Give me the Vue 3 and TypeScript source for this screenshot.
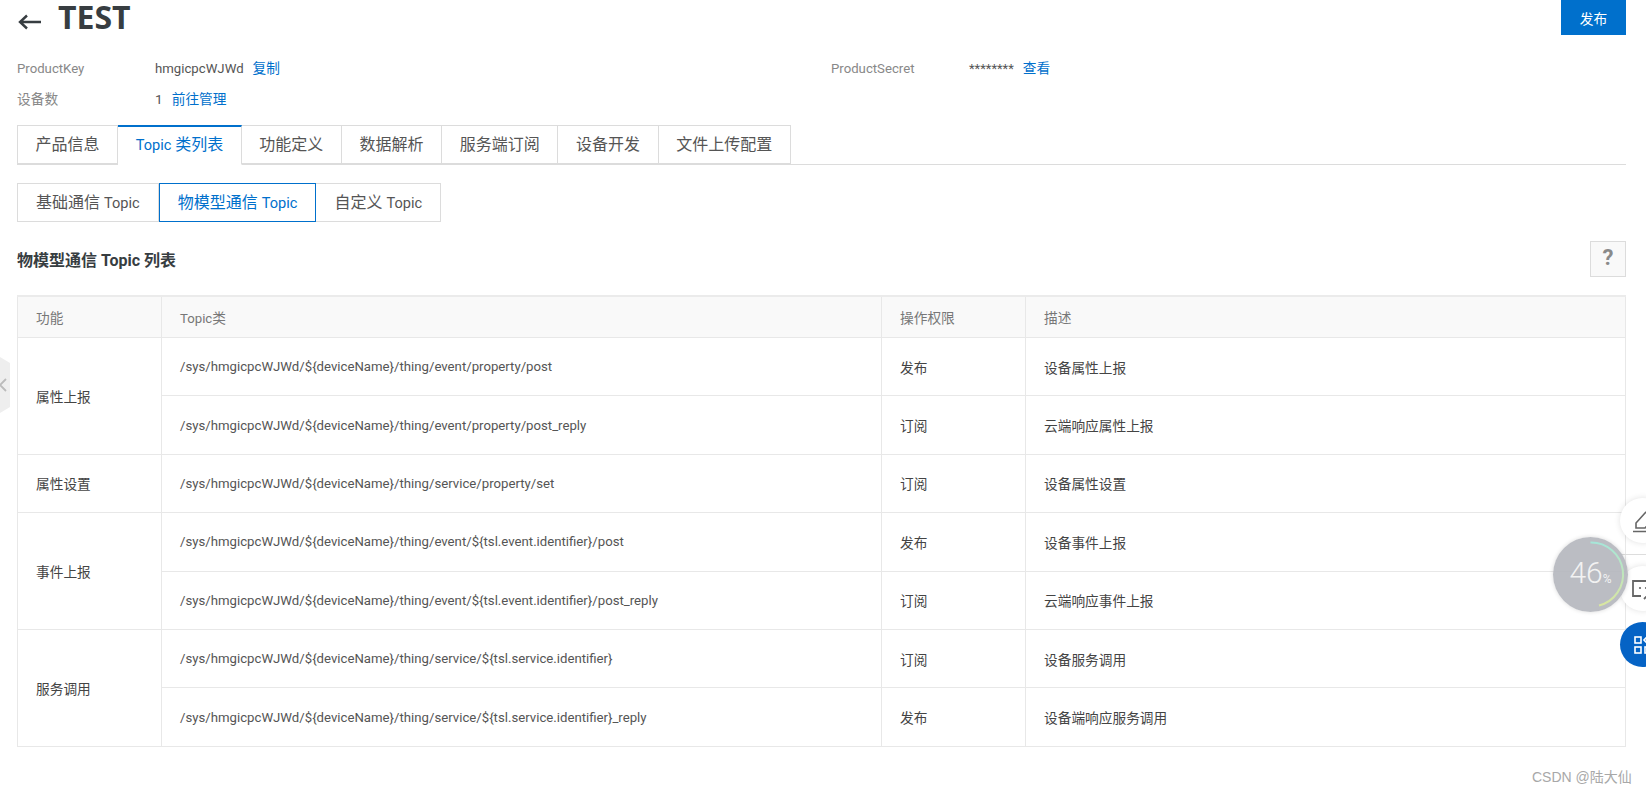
<script setup lang="ts">
interface Row { group?: string; span?: number; topic: string; perm: string; desc: string }
const base = '/sys/hmgicpcWJWd/${deviceName}/thing/'
const rows: Row[] = [
  { group: '属性上报', span: 2, topic: base + 'event/property/post', perm: '发布', desc: '设备属性上报' },
  { topic: base + 'event/property/post_reply', perm: '订阅', desc: '云端响应属性上报' },
  { group: '属性设置', span: 1, topic: base + 'service/property/set', perm: '订阅', desc: '设备属性设置' },
  { group: '事件上报', span: 2, topic: base + 'event/${tsl.event.identifier}/post', perm: '发布', desc: '设备事件上报' },
  { topic: base + 'event/${tsl.event.identifier}/post_reply', perm: '订阅', desc: '云端响应事件上报' },
  { group: '服务调用', span: 2, topic: base + 'service/${tsl.service.identifier}', perm: '订阅', desc: '设备服务调用' },
  { topic: base + 'service/${tsl.service.identifier}_reply', perm: '发布', desc: '设备端响应服务调用' }
]
const tabs = [
  { a: '产品信息', b: '', c: '' },
  { a: '', b: 'Topic ', c: '类列表' },
  { a: '功能定义', b: '', c: '' },
  { a: '数据解析', b: '', c: '' },
  { a: '服务端订阅', b: '', c: '' },
  { a: '设备开发', b: '', c: '' },
  { a: '文件上传配置', b: '', c: '' }
]
const subs = ['基础通信 ', '物模型通信 ', '自定义 ']
</script>

<template>
  <div class="page">
    <header class="head">
      <svg class="back" width="24" height="16" viewBox="0 0 24 16"><path d="M23 8H2M9 1.5 2 8l7 6.5" fill="none" stroke="#373d41" stroke-width="2.4"/></svg>
      <h1>TEST</h1>
      <button class="publish">发布</button>
    </header>
    <section class="info">
      <div class="item"><span class="label latin">ProductKey</span><span class="val latin">hmgicpcWJWd</span><a>复制</a></div>
      <div class="item"><span class="label latin">ProductSecret</span><span class="val stars">********</span><a>查看</a></div>
      <div class="item"><span class="label">设备数</span><span class="val">1</span><a>前往管理</a></div>
    </section>
    <nav class="tabs">
      <div v-for="(t, i) in tabs" :key="i" class="tab" :class="{ on: i === 1 }">{{ t.a }}<span class="word">{{ t.b }}</span>{{ t.c }}</div>
    </nav>
    <div class="subs">
      <div v-for="(s, i) in subs" :key="s" class="sub" :class="{ on: i === 1 }">{{ s }}<span class="word">Topic</span></div>
    </div>
    <div class="title-row">
      <h2>物模型通信 Topic 列表</h2>
      <div class="help">?</div>
    </div>
    <table>
      <colgroup><col class="c1"><col class="c2"><col class="c3"><col></colgroup>
      <thead><tr><th>功能</th><th><span class="latin">Topic</span>类</th><th>操作权限</th><th>描述</th></tr></thead>
      <tbody>
        <tr v-for="r in rows" :key="r.topic">
          <td v-if="r.group" :rowspan="r.span">{{ r.group }}</td>
          <td class="latin">{{ r.topic }}</td>
          <td>{{ r.perm }}</td>
          <td>{{ r.desc }}</td>
        </tr>
      </tbody>
    </table>

    <div class="handle">
      <svg width="10" height="60" viewBox="0 0 10 60"><path d="M0 2 10 8V52L0 58Z" fill="#eeeeee"/><path d="M6 24 0 30l6 6" fill="none" stroke="#bbbbbb" stroke-width="1.8"/></svg>
    </div>
    <div class="fab edit">
      <svg width="26" height="24" viewBox="0 0 26 24"><path d="M4 19v-5L13 4q2-2 4 0l4 3q2 2 0 4l-8 8ZM1 22.5h25" fill="none" stroke="#666" stroke-width="1.6"/></svg>
    </div>
    <div class="sep"></div>
    <div class="fab chat">
      <svg width="26" height="24" viewBox="0 0 26 24"><path d="M22 13V4H1v15h8" fill="none" stroke="#666" stroke-width="1.8"/><path d="M12 22l5-5h9" fill="none" stroke="#666" stroke-width="1.8"/><circle cx="8" cy="11" r="1.1" fill="#666"/><circle cx="14" cy="11" r="1.1" fill="#666"/></svg>
    </div>
    <div class="fab apps">
      <svg width="26" height="24" viewBox="0 0 26 24"><g fill="none" stroke="#fff" stroke-width="1.6"><rect x="1" y="4" width="6" height="6"/><rect x="1" y="14" width="6" height="6"/><rect x="11" y="14" width="6" height="6"/><path d="M14 3l4 4-4 4-4-4Z"/></g></svg>
    </div>
    <div class="meter">
      <svg width="75" height="75" viewBox="0 0 75 75">
        <defs><linearGradient id="arc" x1="0" y1="0" x2="0" y2="1"><stop offset="0" stop-color="#a6e6d8"/><stop offset="1" stop-color="#d9e6a0"/></linearGradient></defs>
        <path d="M37.5 5.5A32 32 0 0 1 46 68.5" fill="none" stroke="url(#arc)" stroke-width="2"/>
      </svg>
      <span class="num">46<small>%</small></span>
    </div>
    <div class="mark">CSDN @陆大仙</div>
  </div>
</template>

<style>
html, body { margin: 0; background: #fff; overflow: hidden; }
</style>

<style scoped>
.page {
  position: relative;
  width: 1646px;
  height: 791px;
  box-sizing: border-box;
  padding: 0 20px 0 17px;
  overflow: hidden;
  font-family: Roboto, "Noto Sans CJK SC", sans-serif;
  color: #333;
  font-size: 13.7px;
}
.head { display: flex; align-items: flex-start; height: 35px; }
.back { margin: 14px 0 0 1px; }
h1 { margin: 0 0 0 16px; font-family: "Open Sans", sans-serif; font-size: 32px; line-height: 33px; font-weight: 700; color: #373d41; }
.publish {
  margin-left: auto; width: 65px; height: 35px; border: 0; padding: 0;
  background: #0070cc; color: #fff; font: inherit;
}
.info { display: grid; grid-template-columns: 814px 1fr; margin-top: 18px; }
.item { display: flex; height: 31px; align-items: baseline; line-height: 31px; }
.label { width: 138px; color: #888; }
.val { color: #555; margin-right: 9px; }
.latin { font-size: 13.2px; }
.stars { font-size: 13px; }
a { color: #0070cc; }
.tabs { display: flex; height: 39px; margin-top: 10px; border-bottom: 1px solid #dcdcdc; }
.tab {
  padding: 0 17.6px; height: 39px; box-sizing: border-box; line-height: 37px; font-size: 16px; color: #555;
  border: 1px solid #dcdcdc; border-left-width: 0; background: #fff;
}
.tab:first-child { border-left-width: 1px; }
.tab.on { color: #0070cc; border-top: 2px solid #0070cc; border-bottom-color: #fff; height: 40px; line-height: 36px; }
.word { font-size: 14.6px; }
.subs { display: flex; margin-top: 18px; height: 39px; }
.sub {
  padding: 0 18px; line-height: 37px; font-size: 16px; color: #555;
  border: 1px solid #dcdcdc; border-left-width: 0; box-sizing: border-box;
}
.sub:first-child { border-left-width: 1px; }
.sub.on { color: #0070cc; border: 1px solid #0070cc; }
.title-row { display: flex; justify-content: space-between; align-items: center; height: 36px; margin-top: 19px; }
h2 { margin: 0; font-size: 16px; font-weight: 700; color: #373d41; }
.help {
  width: 36px; height: 36px; box-sizing: border-box; border: 1px solid #dcdcdc; background: #f9f9f9;
  text-align: center; line-height: 32px; font-size: 22px; font-weight: 700; color: #8a8a8a;
}
table { width: 1609px; margin-top: 18px; border-collapse: collapse; table-layout: fixed; }
.c1 { width: 144px; }
.c2 { width: 720px; }
.c3 { width: 144px; }
th, td { border: 1px solid #e8e8e8; padding: 0 0 0 18px; text-align: left; font-weight: 400; }
th { height: 40px; background: #f9f9f9; color: #777; border-top: 2px solid #ebebeb; }
td { height: 57.4px; color: #444; }
td.latin { color: #555; }
.handle { position: absolute; left: 0; top: 355px; line-height: 0; }
.fab {
  position: absolute; left: 1620px; width: 45px; height: 45px; border-radius: 50%; background: #fff;
  box-shadow: 0 0 6px rgba(0,0,0,.12); display: flex; align-items: center; padding-left: 12px; box-sizing: border-box;
}
.edit { top: 498px; }
.chat { top: 566px; }
.apps { top: 622px; background: #0563c5; padding-left: 14px; box-shadow: none; }
.sep { position: absolute; left: 1622px; top: 554px; width: 24px; height: 1px; background: #ddd; }
.meter {
  position: absolute; left: 1553px; top: 537px; width: 75px; height: 75px; border-radius: 50%;
  background: rgba(180,182,188,.9); box-shadow: 0 0 4px rgba(0,0,0,.15);
}
.meter svg { position: absolute; inset: 0; }
.num {
  position: absolute; left: 0; right: 0; top: 19px; text-align: center; color: #f2f2f2;
  font-family: Roboto, sans-serif; font-size: 30px; line-height: 34px; font-weight: 300;
}
.num small { font-size: 12px; font-weight: 400; }
.mark { position: absolute; left: 1532px; top: 766px; color: #a8a8a8; font-size: 14px; font-family: "Liberation Sans", "Noto Sans CJK SC", sans-serif; }
</style>
